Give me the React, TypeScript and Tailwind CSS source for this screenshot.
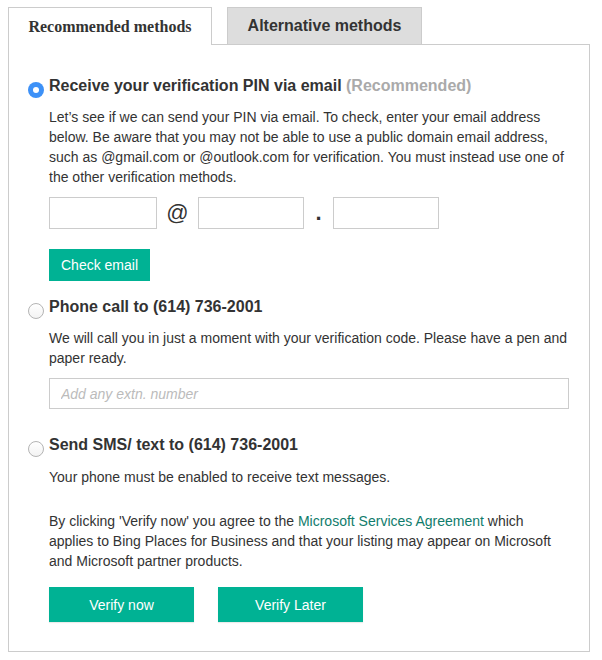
import React from "react"

const font = "font-['Liberation_Sans',Arial,sans-serif]"

function Radio({ checked }: { checked?: boolean }) {
  if (checked) {
    return (
      <span className="mt-[6px] flex h-[16px] w-[16px] shrink-0 items-center justify-center rounded-full bg-[#3d91f7]">
        <span className="h-[6px] w-[6px] rounded-full bg-white" />
      </span>
    )
  }
  return (
    <span className="mt-[6px] h-[16px] w-[16px] shrink-0 rounded-full border border-[#b4b4b4] bg-gradient-to-b from-white to-[#f3f3f3]" />
  )
}

function Option({
  checked,
  title,
  children,
  className = "",
}: {
  checked?: boolean
  title: React.ReactNode
  children?: React.ReactNode
  className?: string
}) {
  return (
    <div className={`flex gap-[5px] ${className}`}>
      <Radio checked={checked} />
      <div className="min-w-0 flex-1">
        <h3 className="text-[16px] font-bold leading-[20px] text-[#333]">{title}</h3>
        {children}
      </div>
    </div>
  )
}

function Box({ className = "" }: { className?: string }) {
  return <input className={`h-[32px] border border-[#cccccc] bg-white outline-none ${className}`} />
}

export default function App() {
  return (
    <div className={`${font} min-h-[660px] bg-white pt-[7px] text-[#333]`}>
      {/* tab strip */}
      <div className="ml-[8px] flex gap-[15px]">
        <div className="relative z-10 -mb-px flex h-[38px] w-[204px] items-center justify-center border border-b-0 border-[#cccccc] bg-white">
          <span className="font-['Liberation_Serif','Times_New_Roman',serif] text-[16px] font-bold text-[#333]">
            Recommended methods
          </span>
        </div>
        <div className="flex h-[37px] w-[195px] items-center justify-center border border-b-0 border-[#cccccc] bg-[#dddddd]">
          <span className="text-[16px] font-bold text-[#333]">Alternative methods</span>
        </div>
      </div>

      {/* panel */}
      <div className="ml-[8px] w-[582px] border border-[#cccccc] pb-[29px] pl-[19px] pr-[20px] pt-[31px] text-[14px] leading-[20px]">
        <Option
          checked
          title={
            <>
              Receive your verification PIN via email <span className="text-[#aaaaaa]">(Recommended)</span>
            </>
          }
        >
          <p className="mt-[11px]">
            Let’s see if we can send your PIN via email. To check, enter your email address below. Be aware that you
            may not be able to use a public domain email address, such as @gmail.com or @outlook.com for verification.
            You must instead use one of the other verification methods.
          </p>
          <div className="mt-[10px] flex items-center">
            <Box className="w-[108px]" />
            <span className="w-[41px] text-center text-[22px] leading-none text-[#333]">@</span>
            <Box className="w-[106px]" />
            <span className="w-[29px] text-center text-[22px] font-bold leading-none text-[#333]">.</span>
            <Box className="w-[106px]" />
          </div>
          <button className="mt-[20px] h-[32px] w-[101px] bg-[#00b294] text-[14px] text-white">Check email</button>
        </Option>

        <Option className="mt-[16px]" title="Phone call to (614) 736-2001">
          <p className="mt-[11px]">
            We will call you in just a moment with your verification code. Please have a pen and paper ready.
          </p>
          <input
            placeholder="Add any extn. number"
            className="mt-[10px] h-[31px] w-full border border-[#cccccc] px-[11px] text-[14px] italic outline-none placeholder:text-[#bbbbbb]"
          />
        </Option>

        <Option className="mt-[26px]" title="Send SMS/ text to (614) 736-2001">
          <p className="mt-[12px]">Your phone must be enabled to receive text messages.</p>
          <p className="mt-[24px]">
            By clicking 'Verify now' you agree to the <a className="text-[#107c6c]">Microsoft Services Agreement</a>{" "}
            which applies to Bing Places for Business and that your listing may appear on Microsoft and Microsoft
            partner products.
          </p>
          <div className="mt-[16px] flex gap-[24px]">
            <button className="h-[35px] w-[145px] bg-[#00b294] text-[14px] text-white shadow-[0_1px_1px_rgba(0,0,0,0.08)]">
              Verify now
            </button>
            <button className="h-[35px] w-[145px] bg-[#00b294] text-[14px] text-white shadow-[0_1px_1px_rgba(0,0,0,0.08)]">
              Verify Later
            </button>
          </div>
        </Option>
      </div>
    </div>
  )
}
